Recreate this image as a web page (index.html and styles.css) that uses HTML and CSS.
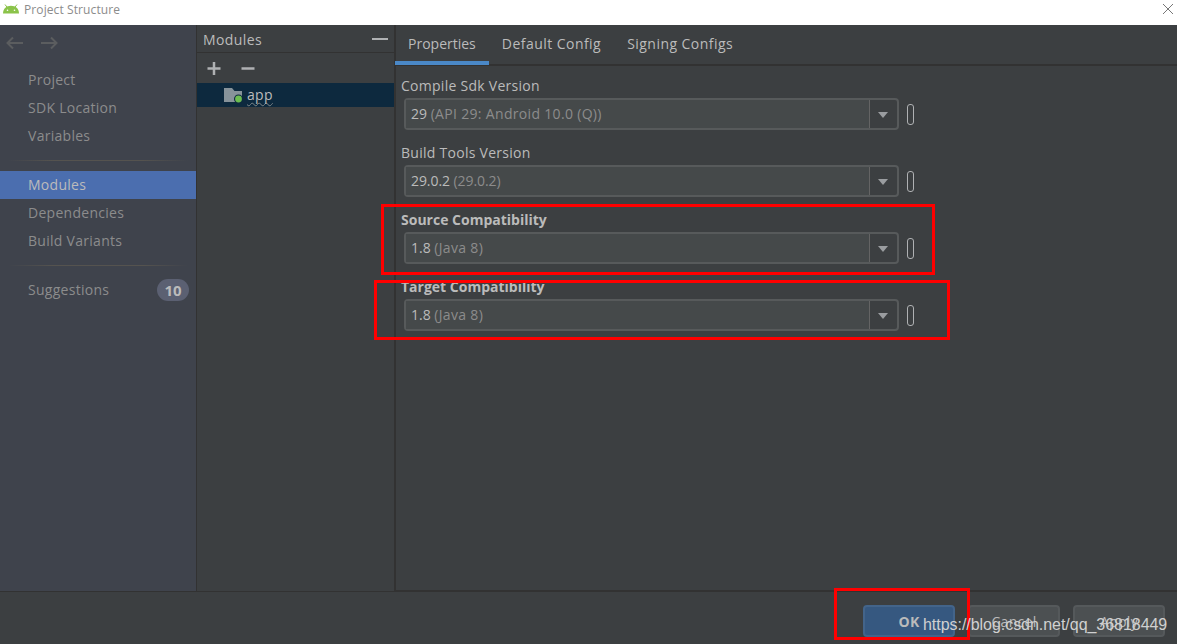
FILE: index.html
```html
<!DOCTYPE html>
<html lang="en">
<head>
  <meta charset="UTF-8">
  <meta name="viewport" content="width=device-width, initial-scale=1.0">
  <title>Project Structure</title>
  <link rel="stylesheet" href="styles.css">
</head>
<body>
  <div class="window">
    <header class="titlebar">
      <svg class="android" width="16" height="10" viewBox="0 0 16 10">
        <path d="M2 .5l2 2.6M14 .5l-2 2.6" stroke="#8bc34a" stroke-width="1"/>
        <path d="M0 9.5C0 4.5 3.6 1.8 8 1.8s8 2.700 8 7.700z" fill="#8bc34a"/>
        <circle cx="4.500" cy="6.200" r=".8" fill="#fff"/>
        <circle cx="11.500" cy="6.200" r=".8" fill="#fff"/>
      </svg>
      <span class="title">Project Structure</span>
      <svg class="close" width="10" height="10" viewBox="0 0 10 10">
        <path d="M0 0l10 10M10 0L0 10" stroke="#777" stroke-width="1"/>
      </svg>
    </header>

    <div class="content">
      <nav class="sidebar">
        <div class="history">
          <svg width="17" height="14" viewBox="0 0 17 14"><path d="M7 1.500L1.500 7 7 12.500M1.500 7H17" fill="none" stroke="#5b5d5f" stroke-width="2"/></svg>
          <svg width="17" height="14" viewBox="0 0 17 14"><path d="M10 1.500L15.500 7 10 12.500M15.500 7H0" fill="none" stroke="#5b5d5f" stroke-width="2"/></svg>
        </div>
        <div class="nav-item">Project</div>
        <div class="nav-item">SDK Location</div>
        <div class="nav-item">Variables</div>
        <div class="separator"></div>
        <div class="nav-item selected">Modules</div>
        <div class="nav-item">Dependencies</div>
        <div class="nav-item">Build Variants</div>
        <div class="separator"></div>
        <div class="nav-item">Suggestions <span class="count">10</span></div>
      </nav>

      <section class="modules">
        <div class="modules-header">Modules
          <svg width="16" height="2" viewBox="0 0 16 2"><path d="M0 1h16" stroke="#afb1b3" stroke-width="2"/></svg>
        </div>
        <div class="modules-tools">
          <svg width="14" height="13" viewBox="0 0 14 13"><path d="M7 0v13M.5 6.500h13" stroke="#afb1b3" stroke-width="2.500"/></svg>
          <svg width="14" height="13" viewBox="0 0 14 13"><path d="M.5 6.500h13" stroke="#afb1b3" stroke-width="2.500"/></svg>
        </div>
        <div class="module-row">
          <svg width="19" height="16" viewBox="0 0 19 16">
            <path d="M0 1h8l2.500 3H18v11H0z" fill="#87939a"/>
            <circle cx="14.500" cy="12" r="4.500" fill="#0d293e"/>
            <circle cx="14.500" cy="12" r="3.400" fill="#6cbe50"/>
          </svg>
          <span class="module-name">app</span>
        </div>
      </section>

      <main class="details">
        <div class="tabs">
          <div class="tab active">Properties</div>
          <div class="tab wide">Default Config</div>
          <div class="tab wide">Signing Configs</div>
        </div>
        <div class="form">
          <div class="field">
            <div class="label">Compile Sdk Version</div>
            <div class="field-row">
              <div class="combo"><div class="value">29 <span>(API 29: Android 10.0 (Q))</span></div><div class="arrow"></div></div>
              <div class="pill"></div>
            </div>
          </div>
          <div class="field">
            <div class="label">Build Tools Version</div>
            <div class="field-row">
              <div class="combo"><div class="value numeric">29.0.2 <span>(29.0.2)</span></div><div class="arrow"></div></div>
              <div class="pill"></div>
            </div>
          </div>
          <div class="field">
            <div class="label bold">Source Compatibility</div>
            <div class="field-row">
              <div class="combo"><div class="value">1.8 <span>(Java 8)</span></div><div class="arrow"></div></div>
              <div class="pill"></div>
            </div>
          </div>
          <div class="field">
            <div class="label bold">Target Compatibility</div>
            <div class="field-row">
              <div class="combo"><div class="value">1.8 <span>(Java 8)</span></div><div class="arrow"></div></div>
              <div class="pill"></div>
            </div>
          </div>
        </div>
      </main>
    </div>

    <footer class="footer">
      <div class="btn primary">OK</div>
      <div class="btn">Cancel</div>
      <div class="btn">Apply</div>
    </footer>

    <!-- red highlight boxes -->
    <div class="mark mark-source"></div>
    <div class="mark mark-target"></div>
    <div class="mark mark-ok"></div>
    <div class="watermark">https://blog.csdn.net/qq_36818449</div>
  </div>
</body>
</html>
```
FILE: styles.css
```css
* {
  box-sizing: border-box;
}

body {
  margin: 0;
  font-family: "Open Sans", "Noto Sans", sans-serif;
  font-size: 14px;
  color: #bbbbbb;
  background: #3c3f41;
  overflow: hidden;
}

svg {
  display: block;
  flex: none;
}

.window {
  position: relative;
  width: 1177px;
  height: 644px;
  display: flex;
  flex-direction: column;
}

/* Title bar */
.titlebar {
  height: 25px;
  background: #fff;
  display: flex;
  align-items: flex-start;
  padding: 4px 4px 0 3px;
}

.title {
  flex: 1;
  margin-left: 5px;
  margin-top: -3px;
  font-size: 12px;
  line-height: 18px;
  letter-spacing: 0.1px;
  color: #8c8c8c;
}

.content {
  height: 566px;
  display: flex;
}

/* Left navigation */
.sidebar {
  width: 197px;
  background: #3f434c;
  border-right: 1px solid #323232;
}

.history {
  display: flex;
  gap: 18px;
  height: 41px;
  padding: 11px 0 0 6px;
}

.nav-item {
  display: flex;
  align-items: center;
  height: 28px;
  padding: 0 7px 2px 28px;
  letter-spacing: 0.28px;
  color: #8c8c8c;
}

.nav-item.selected {
  background: #4b6eaf;
  color: #bbbbbb;
}

.separator {
  height: 1px;
  margin: 10px 8px;
  background: linear-gradient(to right, transparent, #55534f 25%, #55534f 75%, transparent);
}

.count {
  margin-left: auto;
  width: 32px;
  height: 22px;
  margin-top: 2px;
  line-height: 23px;
  border-radius: 11px;
  background: #5b6072;
  color: #bbbbbb;
  font-size: 15px;
  font-weight: bold;
  letter-spacing: 0;
  text-align: center;
}

/* Module list */
.modules {
  width: 197px;
}

.modules-header {
  height: 28px;
  display: flex;
  align-items: center;
  justify-content: space-between;
  padding: 1px 6px 0 6px;
  letter-spacing: 0.4px;
  border-bottom: 1px solid #323232;
}

.modules-tools {
  height: 30px;
  display: flex;
  gap: 20px;
  padding: 9px 0 0 10px;
}

.module-row {
  height: 24px;
  display: flex;
  align-items: center;
  padding-left: 27px;
  background: #0d293e;
}

.module-name {
  margin-left: 4px;
  line-height: 20px;
  letter-spacing: 0.3px;
  text-decoration: underline wavy #7d8588 1px;
  text-underline-offset: 2px;
  text-decoration-skip-ink: none;
}

/* Details */
.details {
  flex: 1;
  border-left: 2px solid #323232;
  border-bottom: 1px solid #323232;
}

.tabs {
  height: 41px;
  display: flex;
  margin-left: -1px;
  border-bottom: 2px solid #323232;
}

.tab {
  height: 40px;
  padding: 0 13px;
  line-height: 37px;
}

.tab.wide {
  letter-spacing: 0.46px;
}

.tab.active {
  border-bottom: 4px solid #4a88c7;
}

.form {
  padding: 9px 0 0 5px;
}

.field {
  height: 67px;
}

.label {
  height: 23px;
  line-height: 22px;
  letter-spacing: 0.27px;
}

.label.bold {
  font-weight: bold;
  letter-spacing: 0;
}

.field-row {
  display: flex;
  align-items: center;
  margin-left: 3px;
  gap: 8px;
}

.combo {
  display: flex;
  width: 495px;
  height: 32px;
  border: 2px solid #575a5b;
  border-radius: 4px;
}

.value {
  flex: 1;
  padding-left: 5px;
  line-height: 27px;
  background: #45494a;
}

.value span {
  letter-spacing: 0.32px;
  color: #8c8c8c;
}

.value.numeric,
.value.numeric span {
  letter-spacing: -0.07px;
}

.arrow {
  width: 28px;
  padding: 1px 1px 0 0;
  border-left: 1px solid #646464;
  display: flex;
  align-items: center;
  justify-content: center;
}

.arrow::before {
  content: "";
  border: 5px solid transparent;
  border-top: 6px solid #9a9da0;
  border-bottom: 0;
}

.pill {
  width: 7px;
  height: 21px;
  margin-top: 1px;
  border: 1px solid #afb1b3;
  border-radius: 3px;
}

/* Bottom buttons */
.footer {
  height: 53px;
  display: flex;
  justify-content: flex-end;
  gap: 13px;
  padding: 13px 12px 0 0;
  border-top: 1px solid #323232;
}

.btn {
  width: 92px;
  height: 32px;
  border: 2px solid #55595b;
  border-radius: 4px;
  background: #4c5052;
  line-height: 29px;
  letter-spacing: 0.3px;
  text-align: center;
}

.btn.primary {
  background: #365880;
  border-color: #43648a;
  font-weight: bold;
}

/* Annotations over the window */
.mark {
  position: absolute;
  border: 3px solid #ff0000;
}

.mark-source {
  left: 381px;
  top: 204px;
  width: 554px;
  height: 71px;
}

.mark-target {
  left: 374px;
  top: 280px;
  width: 576px;
  height: 60px;
}

.mark-ok {
  left: 834px;
  top: 588px;
  width: 136px;
  height: 52px;
}

.watermark {
  position: absolute;
  left: 923px;
  top: 615px;
  font-family: "Liberation Sans", Arial, sans-serif;
  font-size: 16px;
  line-height: 20px;
  letter-spacing: -0.04px;
  color: #d0d0d0;
  white-space: nowrap;
}
```
